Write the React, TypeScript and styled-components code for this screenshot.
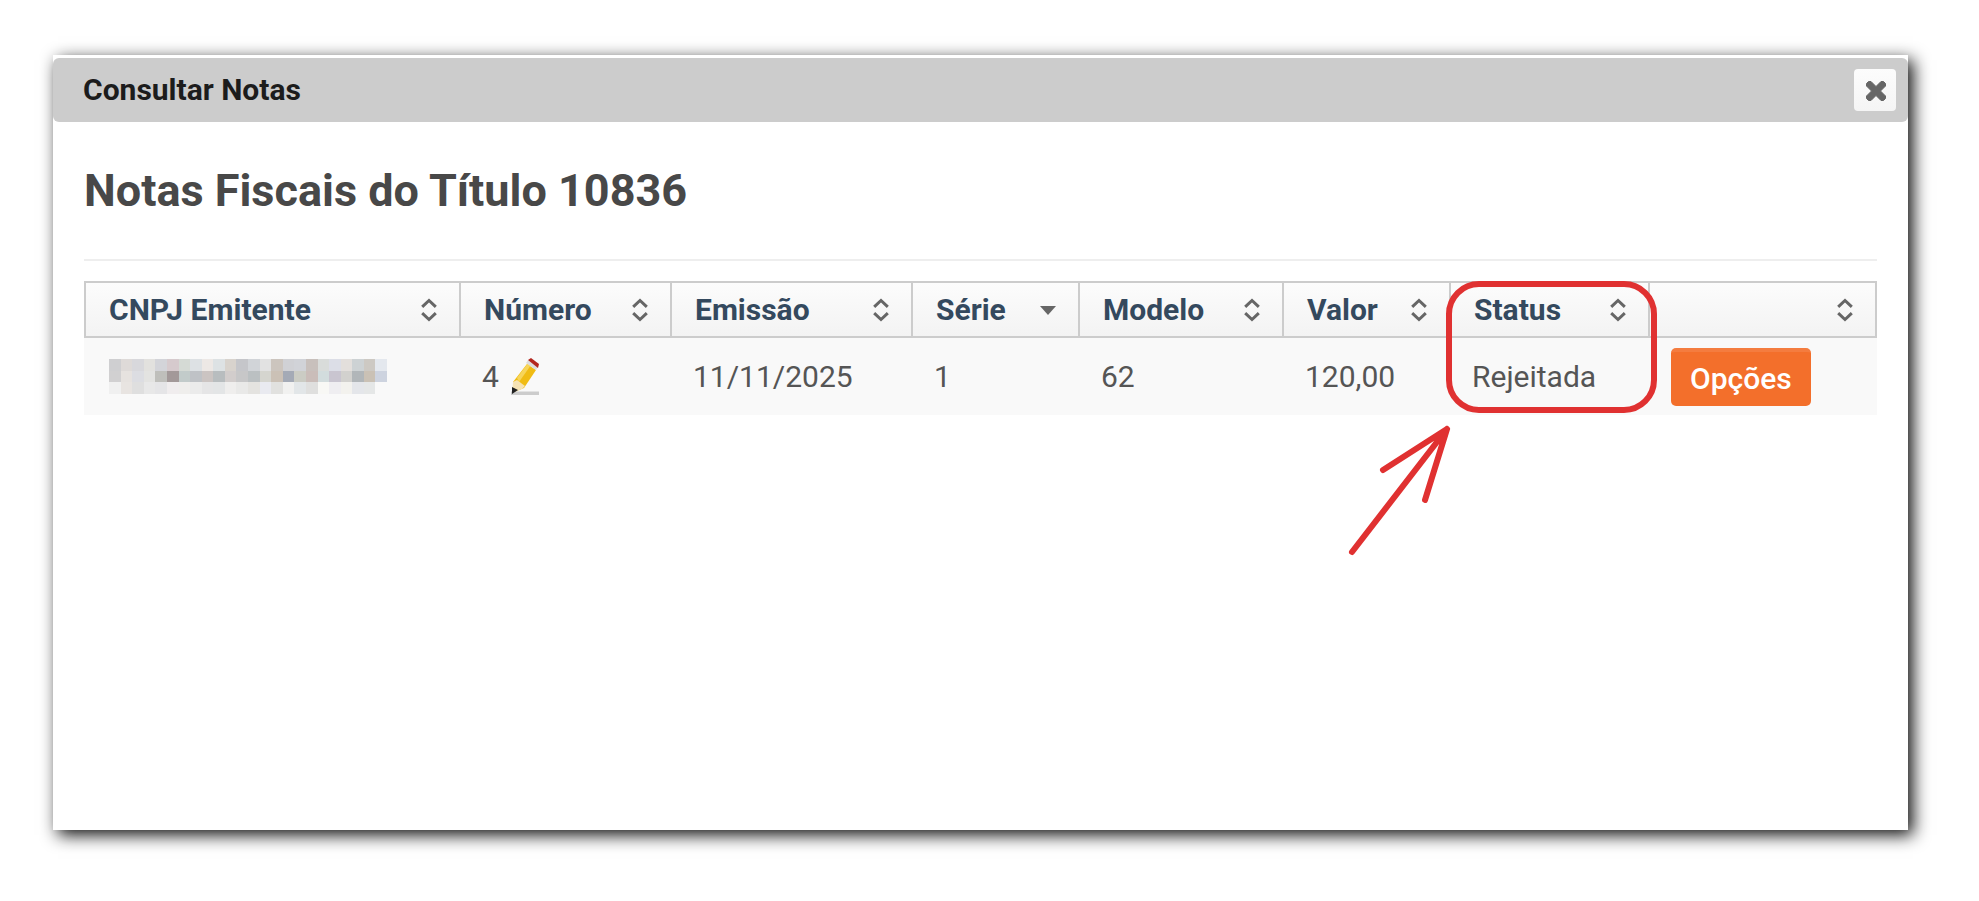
import React from 'react';
import styled, { createGlobalStyle } from 'styled-components';

const GlobalStyle = createGlobalStyle`
  *, *::before, *::after { box-sizing: border-box; }
  body {
    margin: 0;
    background: #fff;
    color: #555;
    font-family: Roboto, "Liberation Sans", sans-serif;
    font-size: 30px;
    line-height: 36px;
  }
`;

const Page = styled.main`
  display: flex;
  min-height: 100vh;
  padding: 55px 71px 71px 53px;
`;

const Dialog = styled.section`
  flex: 1;
  min-width: 0;
  padding-top: 3px;
  background: #fff;
  box-shadow: 5px 5px 16px rgba(0, 0, 0, 0.95);
`;

const TitleBar = styled.header`
  display: flex;
  align-items: center;
  justify-content: space-between;
  height: 64px;
  padding: 0 12px 0 30px;
  border-radius: 6px;
  background: #ccc;
`;

const DialogTitle = styled.h1`
  margin: 0;
  color: #1c1c1c;
  font-size: 30px;
  font-weight: 700;
  line-height: 36px;
`;

const CloseButton = styled.button`
  display: flex;
  align-items: center;
  justify-content: center;
  width: 42px;
  height: 42px;
  padding: 2px 0 0 2px;
  border: 0;
  border-radius: 4px;
  background: linear-gradient(#fcfcfc, #f5f5f5);
  color: #666;
`;

const Content = styled.div`
  padding: 41px 31px;
`;

const Heading = styled.h2`
  margin: 0;
  padding-bottom: 40px;
  border-bottom: 2px solid #eee;
  color: #484848;
  font-size: 45px;
  font-weight: 700;
  line-height: 56px;
`;

const Table = styled.table`
  width: 100%;
  margin-top: 20px;
  border-collapse: separate;
  border-spacing: 0;
  table-layout: fixed;
`;

const HeadCell = styled.th<{ $width?: number }>`
  width: ${({ $width }) => ($width ? `${$width}px` : 'auto')};
  height: 57px;
  padding: 0 22px 0 23px;
  border: solid #ccc;
  border-width: 2px 2px 2px 0;
  background: linear-gradient(#fcfcfc, #f3f3f3);
  color: #34495e;
  text-align: left;

  &:first-child {
    border-left-width: 2px;
  }
`;

const SortLabel = styled.span`
  display: flex;
  align-items: center;
  justify-content: space-between;
`;

const Cell = styled.td`
  position: relative;
  height: 77px;
  padding: 0 21px;
  background: #f9f9f9;

  &:first-child {
    padding-left: 25px;
  }
`;

const NumberGroup = styled.span`
  display: flex;
  align-items: center;
  gap: 11px;
`;

const EditButton = styled.button`
  display: flex;
  padding: 0;
  border: 0;
  background: none;
`;

const OptionsButton = styled.button`
  height: 58px;
  padding: 0 19px;
  border: 0;
  border-top: 4px solid #f47c3f;
  border-radius: 5px;
  background: #f36f2b;
  color: #fff;
  font: 500 30px/54px Roboto, "Liberation Sans", sans-serif;
  vertical-align: middle;
`;

const Annotation = styled.svg`
  position: absolute;
  z-index: 1;
  top: -58px;
  left: -105px;
  pointer-events: none;
`;

const MosaicImage = styled.svg`
  display: block;
`;

const MOSAIC = [
  'cfcfd1 dedad8 d8d8dc e2e1de d3d4d9 d6cacd d5dad5 dde1e4 ede8e5 dde2e4 d8d3cd c5c6ca d1d4d8 e2e2e2 ccc5be d0d1d5 d1d3d8 c8c0bc d9dcda dcdee7 e3dfdc cdd2d4 cdc9c3 e4e8ee',
  'd1d0d1 e6e2df dcdde2 e3e3e1 bfbfbb a39999 c2cbca bfc2c6 cbc4c2 b8bdbf d2cdcc c7c7c8 bbc0c2 d5d5cf cbc1b6 a4aab6 cbccc4 cabdb9 d2dcdd c9c5d0 d2d1ce b1b6b9 cac1b5 cdd3df',
  'f0f0f0 e8e4e1 dfdfdf e8e8e8 e5e5e7 f0edee efeeec ebebeb e5e5e6 e3e5e6 efeeed e9e9e8 e4e3e0 e9eaf0 e1e1df f1f1f0 e2e6e8 dfdfde f8f8f5 efeef1 f3f2ee e4e6ea e5e7e7 f9f9f9',
].map((row) => row.split(' '));

const Mosaic = () => (
  <MosaicImage width="278" height="35" viewBox="0 0 24 3" preserveAspectRatio="none" shapeRendering="crispEdges" role="img" aria-label="CNPJ oculto">
    {MOSAIC.map((row, y) =>
      row.map((fill, x) => <rect key={`${x}-${y}`} x={x} y={y} width="1" height="1" fill={`#${fill}`} />),
    )}
  </MosaicImage>
);

const SortIcon = ({ sorted }: { sorted?: boolean }) => (
  <svg width="16" height="24" viewBox="0 0 16 24" aria-hidden="true">
    {sorted ? (
      <path d="M0 8h16l-8 9z" fill="#666" />
    ) : (
      <path d="M1.200 8.800l6.800-6.300 6.800 6.300M1.200 15.200l6.800 6.300 6.800-6.300" fill="none" stroke="#666" strokeWidth="3" />
    )}
  </svg>
);

const CloseIcon = () => (
  <svg width="22" height="22" viewBox="0 0 22 22" aria-hidden="true">
    <path
      d="M3.500 1.500h2.500l5 5 5-5h2.500l2 2v2.500l-5 5 5 5v2.500l-2 2h-2.500l-5-5-5 5h-2.500l-2-2v-2.500l5-5-5-5v-2.500z"
      fill="currentColor"
      stroke="currentColor"
      strokeLinejoin="round"
    />
  </svg>
);

const PencilIcon = () => (
  <svg width="30" height="38" viewBox="0 0 30 38" aria-hidden="true">
    <path d="M1 33.500h28v3.500H1z" fill="#ccc" />
    <path d="M3 24L17 6l9 6-12 18-10 4z" fill="#f0bc14" />
    <path d="M7 20L18 5l3 2L9 24z" fill="#f7d55a" />
    <path d="M3 24l4-2 8 6-3 3-10 4z" fill="#f6e3b4" />
    <path d="M2 29l6 3-6 4z" fill="#222" />
    <path d="M16 5l2-3 10 7-2 3z" fill="#ddd" />
    <path d="M18 2l3-2 8 6-1 4z" fill="#b3261e" />
  </svg>
);

const COLUMNS = [
  { label: 'CNPJ Emitente', width: 377 },
  { label: 'Número', width: 211 },
  { label: 'Emissão', width: 241 },
  { label: 'Série', width: 167, sorted: true },
  { label: 'Modelo', width: 204 },
  { label: 'Valor', width: 167 },
  { label: 'Status', width: 199 },
  { label: '' },
];

export default function App() {
  return (
    <>
      <GlobalStyle />
      <Page>
        <Dialog role="dialog" aria-labelledby="dialog-title">
          <TitleBar>
            <DialogTitle id="dialog-title">Consultar Notas</DialogTitle>
            <CloseButton type="button" aria-label="Fechar">
              <CloseIcon />
            </CloseButton>
          </TitleBar>
          <Content>
            <Heading>Notas Fiscais do Título 10836</Heading>
            <Table>
              <thead>
                <tr>
                  {COLUMNS.map(({ label, width, sorted }) => (
                    <HeadCell key={label} $width={width} scope="col">
                      <SortLabel>
                        <span>{label}</span>
                        <SortIcon sorted={sorted} />
                      </SortLabel>
                    </HeadCell>
                  ))}
                </tr>
              </thead>
              <tbody>
                <tr>
                  <Cell><Mosaic /></Cell>
                  <Cell>
                    <NumberGroup>
                      4
                      <EditButton type="button" aria-label="Editar número">
                        <PencilIcon />
                      </EditButton>
                    </NumberGroup>
                  </Cell>
                  <Cell>11/11/2025</Cell>
                  <Cell>1</Cell>
                  <Cell>62</Cell>
                  <Cell>120,00</Cell>
                  <Cell>
                    Rejeitada
                    <Annotation width="320" height="280" viewBox="0 0 320 280" fill="none" stroke="#e03131" strokeWidth="6" strokeLinecap="round" strokeLinejoin="round" aria-hidden="true">
                      <rect x="103" y="4" width="205" height="126" rx="30" />
                      <path d="M6 272L101 149M37 190l64-41-22 71" />
                    </Annotation>
                  </Cell>
                  <Cell>
                    <OptionsButton type="button">Opções</OptionsButton>
                  </Cell>
                </tr>
              </tbody>
            </Table>
          </Content>
        </Dialog>
      </Page>
    </>
  );
}
